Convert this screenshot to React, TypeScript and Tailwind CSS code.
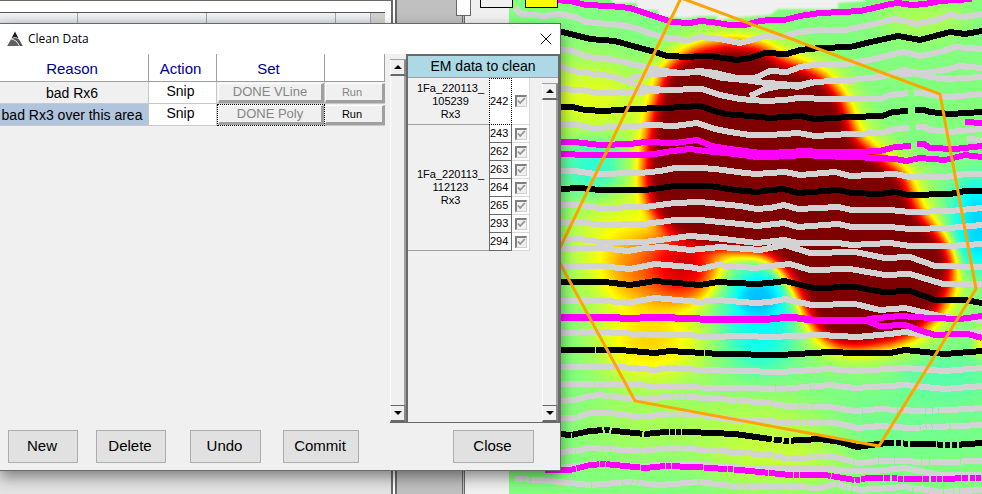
import clsx from "clsx";
import { X } from "lucide-react";

const GRAY = "#d3d3d3";
const BLACK = "#000000";
const PINK = "#ff00ff";

type FlightLine = { color: string; width?: number; dash?: string; points: string };

const flightLines: FlightLine[] = [
  { color: GRAY, points: "515,8 521,14 545,16 560,14 575,17 586,22 620,25 635,28 655,35 672,39 690,40 700,37 720,39 740,43 752,40 765,36 780,37 800,32 820,30 845,30 870,25 895,19 917,24 940,19 950,15 965,17 982,14" },
  { color: GRAY, points: "560,49 573,51 588,57 615,60 640,66 665,71 680,73 700,71 715,73 737,78 755,78 770,71 787,72 800,67 820,64 845,64 870,60 903,52 920,56 940,52 955,47 982,49" },
  { color: GRAY, width: 6, points: "560,66 572,71 610,76 630,82 645,88 665,90 702,89 720,95 740,99 765,101 785,100 798,98 830,99 880,99 890,95 908,93" },
  { color: GRAY, points: "630,78 655,74 680,73 700,72 722,78 745,80 765,83 785,84 797,87 815,82 850,80 880,77 905,70 925,76 945,79 982,77" },
  { color: GRAY, points: "750,96 765,89 780,86 800,85 813,82" },
  { color: GRAY, points: "560,89 580,90 600,93 640,92 665,90" },
  { color: GRAY, points: "914,93 923,93 930,95 950,97 982,94" },
  { color: GRAY, points: "900,74 925,73 945,70 960,66 982,68" },
  { color: GRAY, points: "560,124 575,124 590,128 620,127 650,125 675,126 697,123 715,129 730,132 750,135 770,135 798,133 815,136 850,134 882,133 895,129 909,128" },
  { color: GRAY, points: "916,127 924,127 930,130 950,132 982,129" },
  { color: GRAY, points: "967,139 982,140" },
  { color: GRAY, points: "560,171 575,171 595,174 640,173 660,171 675,168 700,168 715,169 745,173 757,174 770,173 785,172 800,175 835,172 850,176 895,174 910,177 945,177 965,174 982,174" },
  { color: GRAY, points: "560,205 580,205 600,208 645,207 675,203 700,202 740,206 757,209 770,208 784,205 798,209 838,207 852,210 890,210 910,212 950,211 982,208" },
  { color: GRAY, points: "560,222 580,222 600,225 645,224 675,220 700,220 740,224 757,226 784,223 798,227 838,224 852,227 890,227 910,229 950,228 982,225" },
  { color: GRAY, points: "560,240 580,239 600,242 645,242 675,238 690,236 715,238 757,243 784,240 798,243 838,243 852,245 890,243 910,246 950,246 982,244" },
  { color: GRAY, points: "560,249 600,248 628,251 645,248 665,247 690,250 720,247 760,250 785,245 810,253 855,252 885,258 910,257 935,266 982,267" },
  { color: GRAY, points: "560,266 600,266 630,269 655,264 690,267 700,269 717,265 755,268 770,266 790,264 810,270 850,269 885,275 910,274 943,284 982,284" },
  { color: GRAY, points: "560,301 600,300 627,303 655,298 700,302 718,300 755,303 770,302 785,299 812,305 855,304 880,310 905,308 922,312 945,317 982,320" },
  { color: GRAY, points: "560,333 600,332 640,334 655,335 690,335 705,337 745,336 770,337 820,335 857,337 890,334 905,332 925,335 945,334 982,332" },
  { color: GRAY, points: "560,367 620,367 655,370 670,368 700,370 780,372 828,369 855,371 905,368 945,371 982,368" },
  { color: GRAY, dash: "34 1 180 1", points: "560,384 630,384 660,387 740,388 780,389 830,385 855,388 905,385 945,389 982,386" },
  { color: GRAY, dash: "50 1 34 1 27 1 6 1 5 1", points: "560,401 575,400 590,396 600,395 625,398 645,399 665,397 690,397 720,399 745,401 770,403 785,406 830,407 855,411 880,409 920,411 950,410 982,408" },
  { color: GRAY, dash: "17 1 66 1 27 1 5 1 5 1", points: "560,418 575,418 590,413 610,413 640,417 670,414 700,415 735,420 770,421 785,423 835,423 858,428 880,426 910,428 982,425" },
  { color: GRAY, dash: "15 1 26 1 7 1 30 1 24 1", points: "560,452 575,451 590,448 610,449 640,451 670,448 690,449 735,452 770,455 785,458 835,457 858,463 880,461 945,462 982,461" },
  { color: GRAY, points: "560,468 595,464 640,466 690,464 745,468 770,468 820,468 850,471 875,471 905,468 940,475 982,475" },
  { color: GRAY, dash: "9 1 5 1 60 1 30 1", points: "515,479 540,480 560,482 590,485 630,482 660,485 700,482 740,487 775,486 820,488 835,484 860,490 905,487 940,492 982,490" },
  { color: BLACK, points: "555,31 562,32 575,35 590,39 615,41 640,48 655,52 667,56 690,57 698,56 710,56 737,60 750,58 765,53 787,54 800,50 820,48 850,47 875,41 898,36 920,40 935,36 950,32 965,34 982,31" },
  { color: BLACK, points: "560,107 572,107 585,110 605,111 630,109 665,108 700,106 712,110 725,114 750,116 770,118 800,116 815,119 850,117 882,116 893,112 908,111" },
  { color: BLACK, points: "915,110 924,110 930,112 950,114 982,112" },
  { color: BLACK, points: "560,189 580,188 600,190 645,190 675,186 710,186 735,190 757,192 770,190 784,189 798,193 838,190 852,193 880,194 895,192 908,195 950,194 965,191 982,191" },
  { color: BLACK, points: "560,282 605,282 630,285 655,281 700,285 718,282 755,284 770,283 785,281 813,288 855,287 883,292 910,291 935,300 965,300 982,303" },
  { color: BLACK, dash: "35 1 108 1 400 1", points: "560,350 620,350 655,353 670,351 720,354 780,355 830,352 855,353 890,353 905,350 945,354 982,351" },
  { color: BLACK, dash: "11 1 31 2 5 2 31 2 25 1 5 1 5 1 90 2 8 2 5 2 200 1", points: "560,434 571,435 590,431 605,430 625,432 645,434 665,432 690,432 735,434 770,439 785,441 820,439 840,442 857,447 878,444 888,443" },
  { color: BLACK, dash: "6 2 5 2 5 2 26 1", points: "888,443 920,444 955,445 982,443" },
  { color: PINK, points: "553,0 570,1 586,5 610,6 630,8 645,13 660,18 672,22 690,23 700,21 712,22 730,25 745,25 760,21 770,20 784,20 800,16 820,13 842,12 860,11 878,7 890,4 898,3 912,5 925,4 940,1 972,-1" },
  { color: PINK, points: "560,142 575,142 600,145 630,144 645,142 675,143 697,140 712,146 730,149 760,153 770,153 805,151 820,152 858,152 880,151 895,147 911,146" },
  { color: PINK, points: "917,144 924,144 930,148 955,149 982,146" },
  { color: PINK, points: "560,154 590,155 640,155 655,154 672,151 690,149 705,151 735,154 757,157 770,157 805,155 820,156 880,158 895,159 906,161 920,158 945,160 965,155 982,157" },
  { color: PINK, points: "965,122 982,123" },
  { color: PINK, width: 7, points: "560,317 610,317 630,319 650,317 700,319 740,319 770,319 790,317 812,320 870,321" },
  { color: PINK, points: "867,321 880,326 905,325 922,331 935,335 955,334 968,334 982,338" },
  { color: PINK, points: "867,319 900,316 932,318 960,319 982,316" },
  { color: PINK, dash: "31 1 23 1 5 1 34 1 24 1 5 1", points: "545,470 570,470 590,465 605,464 645,468 665,466 695,467 740,470 770,473 790,475 825,475 855,480 865,479" },
  { color: PINK, dash: "18 1 6 2 5 1 5 1", points: "865,478 930,479 982,478" },
];

const anomaly =
  "672,80 686,66 704,58 730,53 758,57 775,68 800,77 818,86 832,102 840,122 845,140 857,152 877,168 896,182 904,204 912,220 926,235 938,249 943,268 940,288 929,308 912,324 890,333 860,338 842,337 828,328 816,310 808,290 797,272 784,256 765,244 735,241 708,240 688,232 670,220 658,202 654,180 656,150 662,115 668,95";

type BlobProps = { x: number; y: number; rx: number; ry: number; level: string; soft: string };

function Blob({ x, y, rx, ry, level, soft }: BlobProps) {
  return <ellipse cx={x} cy={y} rx={rx} ry={ry} fill={level} filter={`url(#${soft})`} />;
}

function SurveyMap() {
  return (
    <svg viewBox="509 0 473 494" preserveAspectRatio="xMinYMin slice" className="h-full w-full" role="img">
      <defs>
        <filter id="soft6" x="-50%" y="-50%" width="200%" height="200%" colorInterpolationFilters="sRGB">
          <feGaussianBlur stdDeviation="7" />
        </filter>
        <filter id="soft14" x="-100%" y="-100%" width="300%" height="300%" colorInterpolationFilters="sRGB">
          <feGaussianBlur stdDeviation="13" />
        </filter>
        <filter id="soft24" x="-100%" y="-100%" width="300%" height="300%" colorInterpolationFilters="sRGB">
          <feGaussianBlur stdDeviation="22" />
        </filter>
        <filter id="edge">
          <feGaussianBlur stdDeviation="1" />
        </filter>
        {/* grey level -> jet colour ramp */}
        <filter id="jet" filterUnits="userSpaceOnUse" x="509" y="0" width="473" height="494" colorInterpolationFilters="sRGB">
          <feComponentTransfer>
            <feFuncR type="table" tableValues="0 0 0 0 .5 1 1 1 .5" />
            <feFuncG type="table" tableValues="0 0 .5 1 1 1 .5 0 0" />
            <feFuncB type="table" tableValues=".5 1 1 1 .5 0 0 0 0" />
          </feComponentTransfer>
        </filter>
      </defs>

      <g filter="url(#jet)">
        <rect x="409" y="-100" width="673" height="694" fill="#808080" />
        <Blob x={590} y={100} rx={55} ry={35} level="#9c9c9c" soft="soft24" />
        <Blob x={620} y={250} rx={45} ry={55} level="#a0a0a0" soft="soft24" />
        <Blob x={650} y={340} rx={50} ry={40} level="#aeaeae" soft="soft24" />
        <Blob x={592} y={167} rx={28} ry={24} level="#686868" soft="soft14" />
        <Blob x={700} y={425} rx={120} ry={30} level="#8c8c8c" soft="soft24" />
        <Blob x={780} y={455} rx={70} ry={30} level="#949494" soft="soft24" />
        <Blob x={945} y={380} rx={45} ry={22} level="#747474" soft="soft14" />
        <Blob x={920} y={425} rx={80} ry={25} level="#7a7a7a" soft="soft24" />
        <Blob x={925} y={20} rx={45} ry={15} level="#8e8e8e" soft="soft14" />
        <polygon points={anomaly} fill="#a4a4a4" stroke="#a4a4a4" strokeWidth="42" strokeLinejoin="round" filter="url(#soft14)" />
        <Blob x={978} y={225} rx={26} ry={48} level="#545454" soft="soft14" />
        <Blob x={662} y={268} rx={52} ry={38} level="#c2c2c2" soft="soft14" />
        <Blob x={682} y={266} rx={30} ry={28} level="#ececec" soft="soft14" />
        <Blob x={760} y={315} rx={34} ry={55} level="#626262" soft="soft14" />
        <polygon points={anomaly} fill="#ffffff" stroke="#ffffff" strokeWidth="20" strokeLinejoin="round" filter="url(#soft6)" />
        <Blob x={758} y={299} rx={20} ry={18} level="#505050" soft="soft6" />
        <Blob x={990} y={342} rx={10} ry={14} level="#c8c8c8" soft="soft6" />
      </g>

      <path
        d="M612-6V3H637V10H658V16L685 18L700 16H717V20L740 17L770 15L778 9H838V3L865 1V-6Z"
        fill="#f0f0f0"
        filter="url(#edge)"
      />

      <g fill="none" shapeRendering="crispEdges">
        {flightLines.map((line) => (
          <polyline key={line.points} points={line.points} stroke={line.color} strokeWidth={line.width ?? 6} strokeDasharray={line.dash} />
        ))}
      </g>

      <polygon points="681,-2 770,31 940,94 976,289 879,446 635,401 556,256" fill="none" stroke="#ffa500" strokeWidth="3" />
    </svg>
  );
}

function Mark() {
  return (
    <svg width="16" height="16" viewBox="0 0 16 16" aria-hidden="true">
      <path d="M8 0.5L11.6 7.4C9.4 6 6.8 5.8 4.4 7.6Z" fill="#1c1c1c" />
      <path d="M0.2 15L4 8.2C7.2 8.6 10.4 11 12 15Z" fill="#606060" />
      <path d="M5 7.8C7.5 6.4 9.8 6.8 12 8.2L15.8 15H12.8C11.4 11.4 8.6 8.6 5 7.8Z" fill="#555" />
    </svg>
  );
}

function ScrollBar({ label }: { label: string }) {
  const arrow = "flex h-4 w-full items-center justify-center border-r-2 border-b-2 border-r-[#8a8a8a] border-b-[#696969] border-l border-l-white bg-[#f0f0f0]";
  return (
    <div className="flex w-4 shrink-0 flex-col border-t border-[#a0a0a0]">
      <button aria-label={`${label} up`} className={arrow}>
        <svg width="8" height="4" viewBox="0 0 8 4"><path d="M4 0L8 4H0Z" /></svg>
      </button>
      <div className="flex-1 border-r-2 border-b border-l border-r-[#a0a0a0] border-b-[#696969] border-l-white" />
      <button aria-label={`${label} down`} className={arrow}>
        <svg width="8" height="4" viewBox="0 0 8 4"><path d="M0 0H8L4 4Z" /></svg>
      </button>
    </div>
  );
}

const reasons = [
  { reason: "bad Rx6", action: "Snip", set: "DONE VLine", selected: false },
  { reason: "bad Rx3 over this area", action: "Snip", set: "DONE Poly", selected: true },
];

function ReasonTable() {
  const raised = "block h-5 w-full border-t border-l border-r-3 border-b-3 border-t-white border-l-white border-r-[#a0a0a0] border-b-[#a0a0a0] bg-[#f0f0f0]";
  return (
    <table className="w-[385px] table-fixed border-separate border-spacing-0 self-start text-center">
      <colgroup>
        <col className="w-[149px]" />
        <col className="w-[68px]" />
        <col className="w-[108px]" />
        <col />
      </colgroup>
      <thead>
        <tr className="h-7 bg-white text-[15px] leading-5 text-[#000090]">
          {["Reason", "Action", "Set", ""].map((name) => (
            <th key={name} className="border-r border-b border-[#a0a0a0] p-0 pt-0.5 pr-1 font-normal">{name}</th>
          ))}
        </tr>
      </thead>
      <tbody>
        {reasons.map((row) => (
          <tr key={row.reason} className="h-[22px]">
            <td className={clsx("border-r border-b border-[#c8c8c8] p-0 pr-1 text-sm leading-5 whitespace-nowrap", row.selected && "bg-[#b0c4de]")}>
              {row.reason}
            </td>
            <td className="border-r border-b border-[#c8c8c8] bg-white p-0 pr-1 pb-1 text-sm leading-4">{row.action}</td>
            <td className={clsx("p-0", row.selected ? "border border-dotted border-black" : "border-r border-b border-[#c8c8c8] pl-px")}>
              <button className={clsx(raised, "text-[13px] leading-4 text-[#858585]")}>{row.set}</button>
            </td>
            <td className="border-b border-[#c8c8c8] p-0">
              <button className={clsx(raised, "pr-1 text-[11px] leading-4", row.selected ? "text-black" : "text-[#858585]")}>
                Run
              </button>
            </td>
          </tr>
        ))}
      </tbody>
    </table>
  );
}

const flights = [
  { name: ["1Fa_220113_", "105239", "Rx3"], lines: [242] },
  { name: ["1Fa_220113_", "112123", "Rx3"], lines: [243, 262, 263, 264, 265, 293, 294] },
];

function LineTable() {
  return (
    <table className="w-[122px] table-fixed self-start border-separate border-spacing-0 text-[11px] leading-[13px]">
      <colgroup>
        <col className="w-[81px]" />
        <col className="w-[23px]" />
        <col className="w-[18px]" />
      </colgroup>
      <tbody>
        {flights.map((flight) =>
          flight.lines.map((line, i) => (
            <tr key={line} className={flight.lines.length === 1 ? "h-[47px]" : "h-[18px]"}>
              {i === 0 && (
                <th rowSpan={flight.lines.length} className="border-b border-[#a0a0a0] p-0 pl-1 text-center font-normal">
                  {flight.name.map((part) => (
                    <div key={part}>{part}</div>
                  ))}
                </th>
              )}
              <td className={clsx("border bg-white p-0", line === 242 ? "border-dotted border-black" : "border-t-0 border-[#696969]")}>{line}</td>
              <td className="border-r border-b border-[#d8d8d8] bg-white p-0">
                <label className="relative mx-auto block h-3 w-3">
                  <input type="checkbox" defaultChecked disabled aria-label={`Line ${line}`} className="block h-3 w-3 appearance-none border border-t-2 border-l-2 border-[#d0d0d0] border-t-[#808080] border-l-[#808080] bg-[#f0f0f0]" />
                  <svg viewBox="0 0 12 12" className="absolute inset-0 h-3 w-3" fill="none" stroke="#949494" strokeWidth="1.8" aria-hidden="true">
                    <path d="M3 5.5L5.2 8L9.8 3" />
                  </svg>
                </label>
              </td>
            </tr>
          )),
        )}
      </tbody>
    </table>
  );
}

function CleanDataDialog() {
  const button = "h-[33px] border border-[#adadad] bg-[#e1e1e1] pr-0.5 text-[15px]";
  return (
    <section
      role="dialog"
      aria-label="Clean Data"
      className="absolute top-[23px] bottom-[23px] left-0 flex w-[561px] flex-col border-t border-r border-b border-[#696969] bg-[#f0f0f0] shadow-[0_6px_14px_rgba(0,0,0,0.45)]"
    >
      <header className="flex h-[30px] shrink-0 items-center bg-white pr-1 pl-[7px]">
        <Mark />
        <h1 className="ml-[5px] flex-1 font-['Open_Sans',sans-serif] text-xs">Clean Data</h1>
        <button aria-label="Close window">
          <X size={20} strokeWidth={1.2} />
        </button>
      </header>

      <div className="flex min-h-0 flex-1 justify-between">
        <ReasonTable />
        <div className="flex border-b border-[#696969]">
          <div className="flex pt-[5px]">
            <ScrollBar label="Reasons" />
          </div>
          <div className="flex w-[154px] flex-col border-t-2 border-r-2 border-l-2 border-[#696969]">
            <h2 className="h-[22px] shrink-0 border-b border-[#a0a0a0] bg-[#add8e6] text-center text-sm leading-5">EM data to clean</h2>
            <div className="flex min-h-0 flex-1 justify-between">
              <LineTable />
              <div className="flex pt-[5px]">
                <ScrollBar label="Lines" />
              </div>
            </div>
          </div>
        </div>
      </div>

      <footer className="flex shrink-0 items-center pt-[7px] pr-[26px] pb-[7px] pl-2">
        <button className={clsx(button, "w-[70px]")}>New</button>
        <button className={clsx(button, "ml-[18px] w-[70px]")}>Delete</button>
        <button className={clsx(button, "ml-6 w-[71px]")}>Undo</button>
        <button className={clsx(button, "ml-[22px] w-[76px]")}>Commit</button>
        <button className={clsx(button, "ml-auto w-[81px]")}>Close</button>
      </footer>
    </section>
  );
}

export default function App() {
  return (
    <div className="relative flex h-screen overflow-hidden bg-[#f0f0f0] font-['Liberation_Sans',Arial,sans-serif] text-black">
      <div className="flex w-[397px] shrink-0 border-r-2 border-[#696969] bg-white pr-[2px]">
        <div className="flex flex-1 flex-col border-t border-r-2 border-[#696969] bg-white pr-1.5">
          <div className="mt-[11px] flex h-3 border-t border-[#555] bg-linear-to-b from-[#f4f4f6] to-[#dcdfe4]">
            <div className="w-[78px] border-r border-[#8fa8c0]" />
            <div className="w-[129px] border-r border-[#8fa8c0]" />
            <div className="w-[129px] border-r border-[#8fa8c0]" />
            <div className="w-[35px] border-r border-[#8fa8c0]" />
            <div className="flex-1 bg-[#d0d0d0]" />
          </div>
          <div className="-mr-1.5 flex-1 bg-[#e3e3e3]" />
        </div>
      </div>
      <div className="w-[68px] shrink-0 border-r-3 border-double border-[#696969] bg-[#c0c0c0]" />
      <div className="w-11 shrink-0" />
      <div className="min-w-0 flex-1">
        <SurveyMap />
      </div>

      <div className="absolute top-0 left-[456px] h-4 w-[15px] border border-t-0 border-[#696969] bg-white" />
      <div className="absolute top-0 left-[480px] flex gap-[12px]">
        <button aria-label="Background colour" className="h-2 w-[33px] border border-t-0 border-black bg-[#f0f0f0]" />
        <button aria-label="Highlight colour" className="h-2 w-[33px] border border-t-0 border-black bg-[#ffff00]" />
      </div>

      <CleanDataDialog />
    </div>
  );
}
